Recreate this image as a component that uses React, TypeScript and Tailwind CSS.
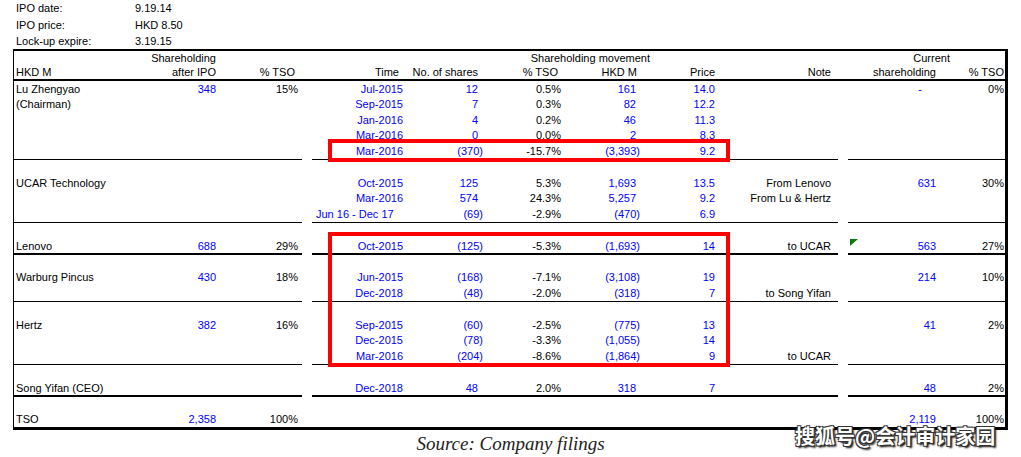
import React from 'react';

type Row = {
  h: string;
  name?: string;
  after?: string;
  tso?: string;
  time?: string;
  timeLeft?: boolean;
  shares?: string;
  mtso?: string;
  hkd?: string;
  price?: string;
  note?: string;
  cur?: string;
  curPad?: boolean;
  ctso?: string;
  flag?: boolean;
};

const neg = (v?: string) => !!v && v.startsWith('(');

const DataRow = ({ r }: { r: Row }) => (
  <div className={`relative flex ${r.h} items-center whitespace-nowrap`}>
    {r.flag && (
      <svg className="absolute left-[836px] top-0" width="8" height="7" viewBox="0 0 8 7">
        <polygon points="0,0 8,0 0,7" fill="#0b7a0b" />
      </svg>
    )}
    <div className="flex w-[288px]">
      <div className="w-[146px] pl-[2px]">{r.name}</div>
      <div className="w-[56px] text-right text-[#0000ff]">{r.after}</div>
      <div className="w-[82px] text-right">{r.tso}</div>
      <div className="w-[4px]" />
    </div>
    <div className="w-[10px]" />
    <div className="flex w-[526px]">
      {r.timeLeft ? (
        <div className="w-[91px] pl-[4px] text-[#0000ff]">{r.time}</div>
      ) : (
        <div className="w-[91px] text-right text-[#0000ff]">{r.time}</div>
      )}
      <div className={`w-[80px] text-right text-[#0000ff] ${neg(r.shares) ? '' : 'pr-[5px]'}`}>{r.shares}</div>
      <div className="w-[78px] text-right">{r.mtso}</div>
      <div className={`w-[79px] text-right text-[#0000ff] ${neg(r.hkd) ? '' : 'pr-[4px]'}`}>{r.hkd}</div>
      <div className="w-[75px] text-right text-[#0000ff]">{r.price}</div>
      <div className="w-[116px] text-right">{r.note}</div>
      <div className="w-[7px]" />
    </div>
    <div className="w-[10px]" />
    <div className="flex w-[157px]">
      <div className={`w-[88px] text-right text-[#0000ff] ${r.curPad ? 'pr-[14px]' : ''}`}>{r.cur}</div>
      <div className="w-[68px] text-right">{r.ctso}</div>
      <div className="w-[1px]" />
    </div>
  </div>
);

const Sep = ({ thick }: { thick?: boolean }) => (
  <div className="flex">
    <div className={`w-[288px] ${thick ? 'h-[2px]' : 'h-[1px]'} bg-black`} />
    <div className="w-[10px]" />
    <div className={`w-[526px] ${thick ? 'h-[2px]' : 'h-[1px]'} bg-black`} />
    <div className="w-[10px]" />
    <div className={`w-[157px] ${thick ? 'h-[2px]' : 'h-[1px]'} bg-black`} />
  </div>
);

const Blank = ({ h }: { h: string }) => <div className={h} />;

const lu: Row[] = [
  { h: 'h-[15.6px]', name: 'Lu Zhengyao', after: '348', tso: '15%', time: 'Jul-2015', shares: '12', mtso: '0.5%', hkd: '161', price: '14.0', cur: '-', curPad: true, ctso: '0%' },
  { h: 'h-[15.6px]', name: '(Chairman)', time: 'Sep-2015', shares: '7', mtso: '0.3%', hkd: '82', price: '12.2' },
  { h: 'h-[15.6px]', time: 'Jan-2016', shares: '4', mtso: '0.2%', hkd: '46', price: '11.3' },
  { h: 'h-[15.6px]', time: 'Mar-2016', shares: '0', mtso: '0.0%', hkd: '2', price: '8.3' },
  { h: 'h-[15.6px]', time: 'Mar-2016', shares: '(370)', mtso: '-15.7%', hkd: '(3,393)', price: '9.2' },
];

const ucar: Row[] = [
  { h: 'h-[15.5px]', name: 'UCAR Technology', time: 'Oct-2015', shares: '125', mtso: '5.3%', hkd: '1,693', price: '13.5', note: 'From Lenovo', cur: '631', ctso: '30%' },
  { h: 'h-[15.5px]', time: 'Mar-2016', shares: '574', mtso: '24.3%', hkd: '5,257', price: '9.2', note: 'From Lu & Hertz' },
  { h: 'h-[15.5px]', time: 'Jun 16 - Dec 17', timeLeft: true, shares: '(69)', mtso: '-2.9%', hkd: '(470)', price: '6.9' },
];

const lenovo: Row = { h: 'h-[14px]', name: 'Lenovo', after: '688', tso: '29%', time: 'Oct-2015', shares: '(125)', mtso: '-5.3%', hkd: '(1,693)', price: '14', note: 'to UCAR', cur: '563', ctso: '27%', flag: true };

const warburg: Row[] = [
  { h: 'h-[15.5px]', name: 'Warburg Pincus', after: '430', tso: '18%', time: 'Jun-2015', shares: '(168)', mtso: '-7.1%', hkd: '(3,108)', price: '19', cur: '214', ctso: '10%' },
  { h: 'h-[15.5px]', time: 'Dec-2018', shares: '(48)', mtso: '-2.0%', hkd: '(318)', price: '7', note: 'to Song Yifan' },
];

const hertz: Row[] = [
  { h: 'h-[15.5px]', name: 'Hertz', after: '382', tso: '16%', time: 'Sep-2015', shares: '(60)', mtso: '-2.5%', hkd: '(775)', price: '13', cur: '41', ctso: '2%' },
  { h: 'h-[15.5px]', time: 'Dec-2015', shares: '(78)', mtso: '-3.3%', hkd: '(1,055)', price: '14' },
  { h: 'h-[15.5px]', time: 'Mar-2016', shares: '(204)', mtso: '-8.6%', hkd: '(1,864)', price: '9', note: 'to UCAR' },
];

const song: Row = { h: 'h-[14px]', name: 'Song Yifan (CEO)', time: 'Dec-2018', shares: '48', mtso: '2.0%', hkd: '318', price: '7', cur: '48', ctso: '2%' };

const tso: Row = { h: 'h-[15px]', name: 'TSO', after: '2,358', tso: '100%', cur: '2,119', ctso: '100%' };

export default function App() {
  return (
    <div className="relative w-[1021px] h-[457px] overflow-hidden bg-white text-[11px] text-black font-['Liberation_Sans',Arial,sans-serif]">
      <div className="h-[49px] pl-[16px]">
        <div className="flex h-[16.5px] items-center">
          <div className="w-[119px]">IPO date:</div>
          <div>9.19.14</div>
        </div>
        <div className="flex h-[16.5px] items-center">
          <div className="w-[119px]">IPO price:</div>
          <div>HKD 8.50</div>
        </div>
        <div className="flex h-[16px] items-center">
          <div className="w-[119px]">Lock-up expire:</div>
          <div>3.19.15</div>
        </div>
      </div>

      <div className="ml-[13px] w-[995px] border-l border-t-2 border-r-[3px] border-b-[3px] border-black">
        <div className="border-b-2 border-black whitespace-nowrap">
          <div className="flex h-[14px] items-center">
            <div className="w-[202px] text-right">Shareholding</div>
            <div className="w-[96px]" />
            <div className="w-[14px]" />
            <div className="w-[324px] text-right">Shareholding movement</div>
            <div className="w-[212px]" />
            <div className="w-[88px] text-right">Current</div>
          </div>
          <div className="flex h-[14px] items-center">
            <div className="flex w-[288px]">
              <div className="w-[146px] pl-[2px]">HKD M</div>
              <div className="w-[56px] text-right">after IPO</div>
              <div className="w-[82px] text-right pr-[3px]">% TSO</div>
            </div>
            <div className="w-[10px]" />
            <div className="flex w-[526px]">
              <div className="w-[91px] text-right pr-[4px]">Time</div>
              <div className="w-[80px] text-right pr-[5px]">No. of shares</div>
              <div className="w-[78px] text-right pr-[3px]">% TSO</div>
              <div className="w-[79px] text-right pr-[3px]">HKD M</div>
              <div className="w-[75px] text-right">Price</div>
              <div className="w-[116px] text-right">Note</div>
            </div>
            <div className="w-[10px]" />
            <div className="flex w-[157px]">
              <div className="w-[88px] text-right">shareholding</div>
              <div className="w-[68px] text-right">% TSO</div>
            </div>
          </div>
        </div>

        {lu.map((r, i) => <DataRow key={i} r={r} />)}
        <Sep />

        <Blank h="h-[15.5px]" />
        {ucar.map((r, i) => <DataRow key={i} r={r} />)}
        <Sep />

        <Blank h="h-[16px]" />
        <DataRow r={lenovo} />
        <Sep thick />

        <Blank h="h-[15px]" />
        {warburg.map((r, i) => <DataRow key={i} r={r} />)}
        <Sep />

        <Blank h="h-[15.5px]" />
        {hertz.map((r, i) => <DataRow key={i} r={r} />)}
        <Sep />

        <Blank h="h-[16px]" />
        <DataRow r={song} />
        <Sep thick />

        <Blank h="h-[15px]" />
        <DataRow r={tso} />
      </div>

      <div className="mt-[3px] text-center text-[19px] leading-[22px] italic text-[#222] font-['Liberation_Serif','Times_New_Roman',serif]">
        Source: Company filings
      </div>

      {/* highlight boxes */}
      <div className="absolute left-[328px] top-[139px] w-[402px] h-[23px] border-4 border-[#ff0000]" />
      <div className="absolute left-[328px] top-[232px] w-[402px] h-[135px] border-4 border-[#ff0000]" />

      {/* watermark */}
      <div className="absolute left-[795px] top-[425px] text-[20px] leading-[22px] font-bold text-white font-['Noto_Sans_CJK_SC',sans-serif] [text-shadow:1px_1px_0_#333,-1px_-1px_0_#333,1px_-1px_0_#333,-1px_1px_0_#333,2px_2px_2px_#000]">
        搜狐号@会计审计家园
      </div>
    </div>
  );
}
